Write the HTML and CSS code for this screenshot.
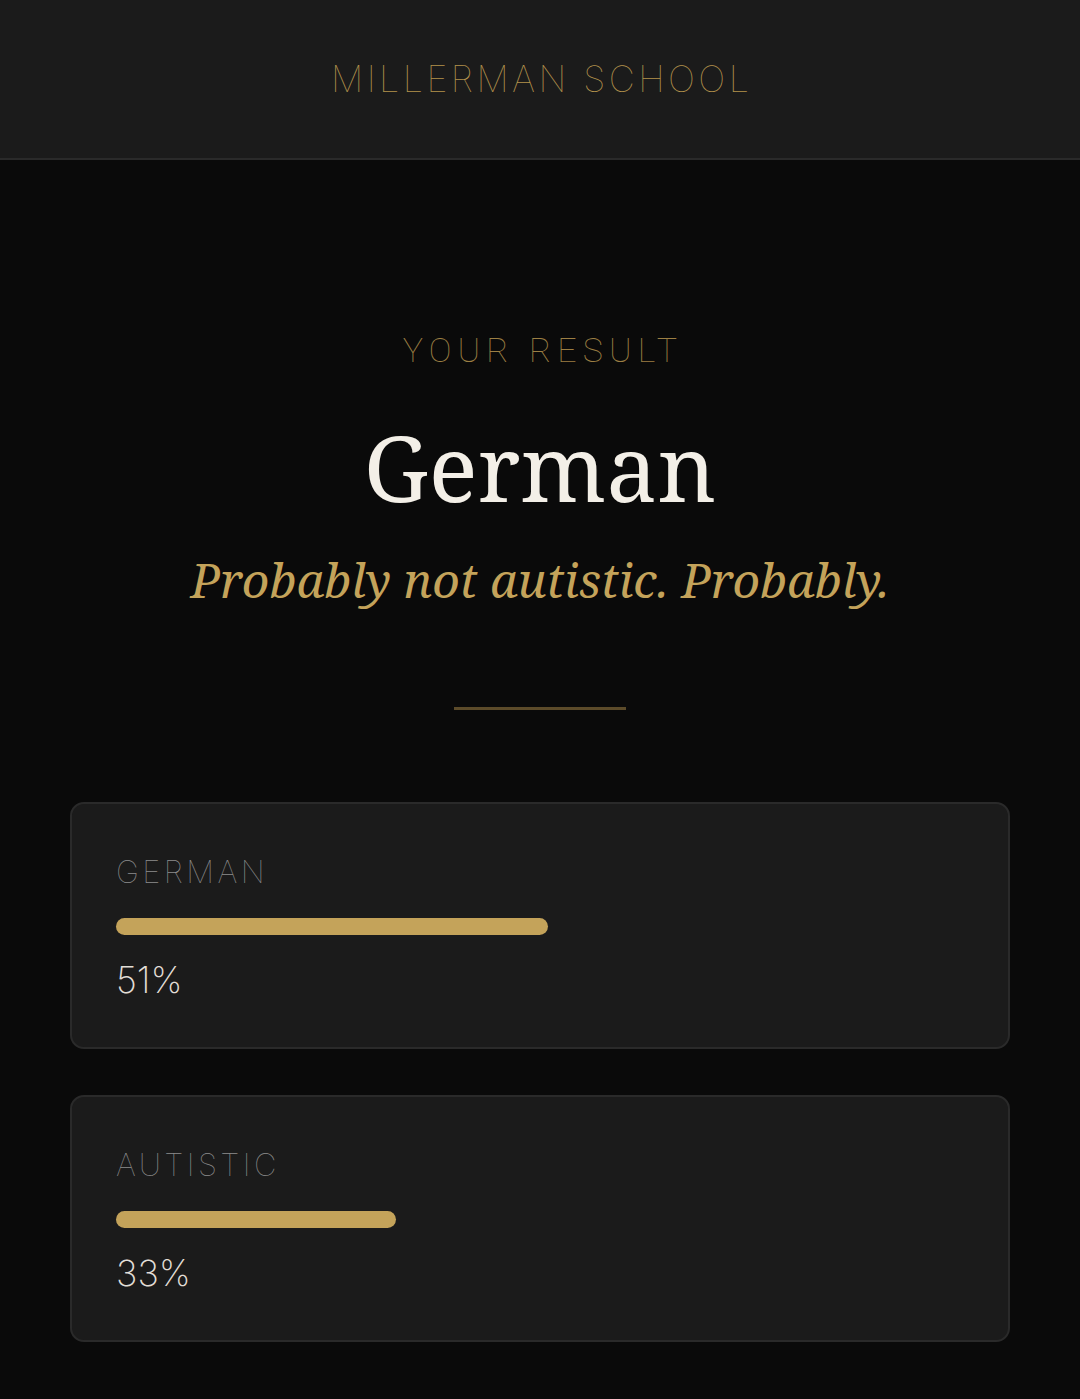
FILE: index.html
```html
<!DOCTYPE html>
<html lang="en">
<head>
    <meta charset="UTF-8">
    <meta name="viewport" content="width=device-width, initial-scale=1.0">
    <title>Millerman School - Result</title>
    <link rel="stylesheet" href="styles.css">
</head>
<body>
    <header class="topo">
        <div class="marca">MILLERMAN SCHOOL</div>
    </header>

    <main class="resultado">
        <div class="rotulo">YOUR RESULT</div>
        <h1 class="titulo">German</h1>
        <p class="subtitulo">Probably not autistic. Probably.</p>
        <div class="divisor"></div>

        <div class="cartoes">
            <div class="cartao">
                <div class="cartao-nome">GERMAN</div>
                <div class="trilha"><div class="barra" style="width: 51%"></div></div>
                <div class="valor">51%</div>
            </div>
            <div class="cartao">
                <div class="cartao-nome">AUTISTIC</div>
                <div class="trilha"><div class="barra" style="width: 33%"></div></div>
                <div class="valor">33%</div>
            </div>
        </div>
    </main>
</body>
</html>
```

FILE: styles.css
```css
body {
    margin: 0;
    background-color: #0a0a0a;
    font-family: Inter, Roboto, sans-serif;
}
.topo {
    height: 158px;
    background-color: #1b1b1b;
    border-bottom: 2px solid #2a2a2a;
    display: flex;
    align-items: center;
    justify-content: center;
}
.marca {
    color: #b3924c;
    font-size: 36px;
    font-weight: 100;
    letter-spacing: 0.095em;
    margin-right: -0.095em;
}
.resultado {
    padding: 170px 70px 58px;
    text-align: center;
}
.rotulo {
    color: #9c7f43;
    font-family: Roboto, sans-serif;
    font-size: 34px;
    font-weight: 100;
    letter-spacing: 0.18em;
    margin-right: -0.18em;
    line-height: 40px;
}
.titulo {
    margin: 42px 0 0;
    color: #f3efe7;
    font-family: "Noto Serif", "DejaVu Serif", serif;
    font-size: 91px;
    font-weight: 400;
    line-height: 110px;
}
.subtitulo {
    margin: 28px 0 0;
    color: #c4a35a;
    font-family: "Noto Serif", "DejaVu Serif", serif;
    font-style: italic;
    font-size: 48px;
    line-height: 60px;
}
.divisor {
    width: 172px;
    height: 3px;
    margin: 97px auto 0;
    background-color: #5c4b2a;
}
.cartoes {
    margin-top: 92px;
    display: flex;
    flex-direction: column;
    gap: 46px;
    text-align: left;
}
.cartao {
    background-color: #1b1b1b;
    border: 2px solid #2a2a2a;
    border-radius: 14px;
    padding: 48px 44px 44px;
}
.cartao-nome {
    color: #8c8c8c;
    font-size: 31px;
    font-weight: 100;
    letter-spacing: 0.11em;
    line-height: 40px;
}
.trilha {
    margin-top: 26px;
    height: 17px;
}
.barra {
    height: 100%;
    background-color: #c4a35a;
    border-radius: 9px;
}
.valor {
    margin-top: 22px;
    color: #e2ded6;
    font-size: 36px;
    font-weight: 200;
    line-height: 46px;
}
```
